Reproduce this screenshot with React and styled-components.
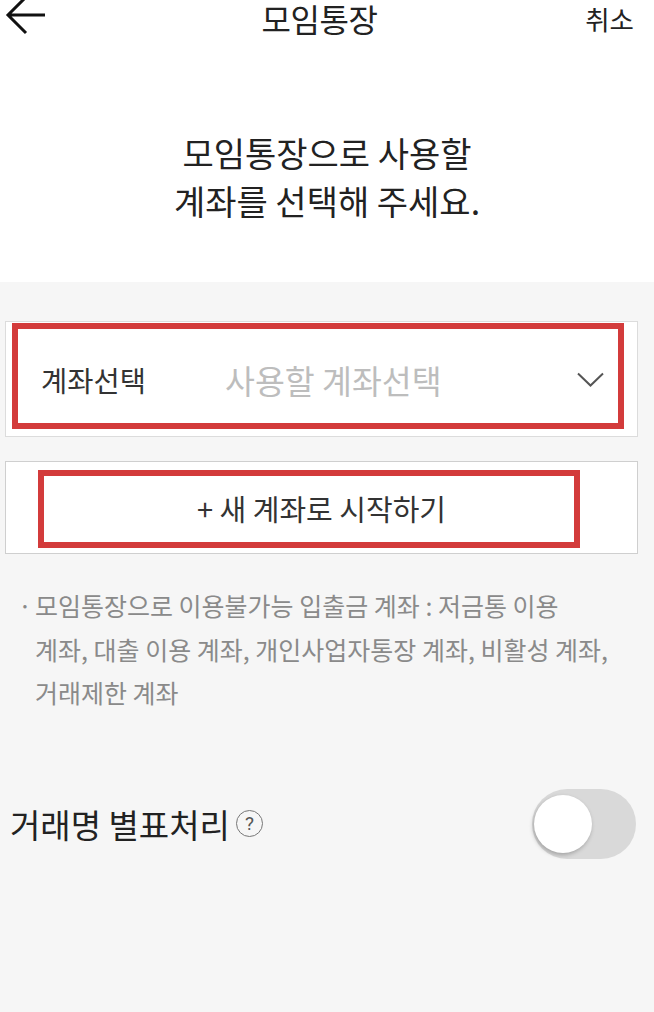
import React, { useState } from 'react';
import styled, { createGlobalStyle } from 'styled-components';

const GlobalStyle = createGlobalStyle`
  html, body {
    margin: 0;
    padding: 0;
    background: #f6f6f6;
  }
  body {
    font-family: 'Noto Sans CJK KR', 'Noto Sans', sans-serif;
    color: #222;
  }
`;

const Page = styled.div`
  width: 654px;
  min-height: 1012px;
  background: #f6f6f6;
`;

// top white area: header + headline
const TopSection = styled.div`
  background: #fff;
  height: 282px;
`;

const Header = styled.header`
  display: grid;
  grid-template-columns: 1fr auto 1fr;
  align-items: center;
  height: 37px;
  padding: 0 20px 0 5px;
`;

const BackButton = styled.button`
  justify-self: start;
  align-self: start;
  border: 0;
  background: none;
  padding: 0;
  width: 44px;
  height: 37px;
  display: flex;
  align-items: flex-start;

  svg {
    overflow: visible;
  }
`;

const Title = styled.h1`
  margin: 0;
  font-size: 32px;
  line-height: 37px;
  font-weight: 400;
  letter-spacing: -0.5px;
`;

const CancelButton = styled.button`
  justify-self: end;
  border: 0;
  background: none;
  padding: 0;
  font-family: inherit;
  font-size: 26.5px;
  line-height: 37px;
  color: #222;
`;

const Headline = styled.h2`
  margin: 92px 0 0;
  text-align: center;
  font-size: 34px;
  line-height: 48px;
  font-weight: 400;
  color: #222;
`;

const Card = styled.div`
  position: relative;
  margin: ${({ $top }) => $top}px 16px 0 5px;
  background: #fff;
  border: 1px solid ${({ $border }) => $border};
  height: ${({ $height }) => $height}px;
  display: flex;
  align-items: center;
  box-sizing: border-box;
`;

// red marker drawn over a card
const Highlight = styled.div`
  position: absolute;
  top: ${({ $t }) => $t}px;
  left: ${({ $l }) => $l}px;
  right: ${({ $r }) => $r}px;
  bottom: ${({ $b }) => $b}px;
  border: 6px solid #d33b3b;
  pointer-events: none;
`;

const SelectRow = styled.div`
  flex: 1;
  display: flex;
  align-items: center;
  padding: 0 33px 0 35px;
`;

const FieldLabel = styled.span`
  width: 184px;
  font-size: 28.5px;
  color: #333;
`;

const Placeholder = styled.span`
  flex: 1;
  font-size: 32.5px;
  color: #bdbdbd;
`;

const NewAccountButton = styled.button`
  flex: 1;
  border: 0;
  background: none;
  font-family: inherit;
  font-size: 29px;
  color: #333;
  text-align: center;
  padding: 0;
`;

const Notes = styled.div`
  display: flex;
  margin-top: 30px;
  padding-left: 18px;
  font-size: 25px;
  line-height: 43.5px;
  color: #8a8a8a;
`;

const Bullet = styled.span`
  width: 17px;
  flex-shrink: 0;
`;

const ToggleRow = styled.div`
  display: flex;
  align-items: center;
  justify-content: space-between;
  margin-top: 74px;
  padding: 0 18px 0 10px;
  height: 70px;
`;

const ToggleLabel = styled.span`
  display: flex;
  align-items: center;
  font-size: 33px;
  color: #222;
`;

const HelpIcon = styled.span`
  margin-left: 6px;
  width: 25px;
  height: 25px;
  border: 1.5px solid #777;
  border-radius: 50%;
  display: inline-flex;
  align-items: center;
  justify-content: center;
  font-family: 'Roboto', sans-serif;
  font-size: 19px;
  color: #555;
`;

const Track = styled.button`
  position: relative;
  width: 104px;
  height: 70px;
  border: 0;
  padding: 0;
  border-radius: 35px;
  background: ${({ $on }) => ($on ? '#e0312f' : '#d9d9d9')};
`;

const Knob = styled.span`
  position: absolute;
  top: 6px;
  left: ${({ $on }) => ($on ? 44 : 2)}px;
  width: 58px;
  height: 58px;
  border-radius: 50%;
  background: #fff;
  box-shadow: -1px 2px 4px rgba(0, 0, 0, 0.25);
`;

const BackArrow = () => (
  <svg width="44" height="37" viewBox="0 0 44 37" fill="none">
    <path d="M40 15H4M21 -3L3 15L21 33" stroke="#111" strokeWidth="3" />
  </svg>
);

const Chevron = () => (
  <svg width="27" height="15" viewBox="0 0 27 15" fill="none">
    <path d="M1 1.5L13.5 13.5L26 1.5" stroke="#555" strokeWidth="2" />
  </svg>
);

export default function App() {
  const [masked, setMasked] = useState(false);

  return (
    <Page>
      <GlobalStyle />
      <TopSection>
        <Header>
          <BackButton aria-label="뒤로">
            <BackArrow />
          </BackButton>
          <Title>모임통장</Title>
          <CancelButton>취소</CancelButton>
        </Header>
        <Headline>
          모임통장으로 사용할
          <br />
          계좌를 선택해 주세요.
        </Headline>
      </TopSection>

      <Card $top={39} $height={116} $border="#dcdcdc">
        <SelectRow>
          <FieldLabel>계좌선택</FieldLabel>
          <Placeholder>사용할 계좌선택</Placeholder>
          <Chevron />
        </SelectRow>
        <Highlight $t={1} $l={6} $r={13} $b={7} />
      </Card>

      <Card $top={24} $height={93} $border="#cfcfcf">
        <NewAccountButton>+ 새 계좌로 시작하기</NewAccountButton>
        <Highlight $t={8} $l={32} $r={57} $b={5} />
      </Card>

      <Notes>
        <Bullet>·</Bullet>
        <span>
          모임통장으로 이용불가능 입출금 계좌 : 저금통 이용
          <br />
          계좌, 대출 이용 계좌, 개인사업자통장 계좌, 비활성 계좌,
          <br />
          거래제한 계좌
        </span>
      </Notes>

      <ToggleRow>
        <ToggleLabel>
          거래명 별표처리
          <HelpIcon>?</HelpIcon>
        </ToggleLabel>
        <Track $on={masked} onClick={() => setMasked(!masked)} aria-label="거래명 별표처리">
          <Knob $on={masked} />
        </Track>
      </ToggleRow>
    </Page>
  );
}
